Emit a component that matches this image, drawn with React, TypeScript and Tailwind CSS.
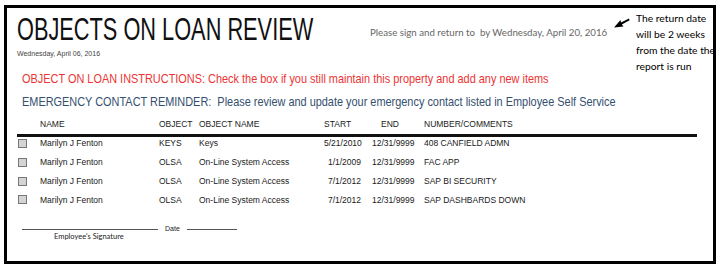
const rows = [
  { name: "Marilyn J Fenton", obj: "KEYS", objName: "Keys", start: "5/21/2010", end: "12/31/9999", comments: "408 CANFIELD ADMN" },
  { name: "Marilyn J Fenton", obj: "OLSA", objName: "On-Line System Access", start: "1/1/2009", end: "12/31/9999", comments: "FAC APP" },
  { name: "Marilyn J Fenton", obj: "OLSA", objName: "On-Line System Access", start: "7/1/2012", end: "12/31/9999", comments: "SAP BI SECURITY" },
  { name: "Marilyn J Fenton", obj: "OLSA", objName: "On-Line System Access", start: "7/1/2012", end: "12/31/9999", comments: "SAP DASHBARDS DOWN" },
];

const arial = "font-['Liberation_Sans',Arial,sans-serif]";
const calibri = "font-['Lato',sans-serif]";

export default function App() {
  return (
    <div className={`w-[720px] h-[268px] bg-white relative ${arial}`}>
      <div className="absolute left-[4px] top-[5px] w-[712px] h-[259px] border-[3px] border-black" />

      {/* arrow pointing at the return date */}
      <div className="absolute left-[613px] top-[17px]">
        <svg width="17" height="12" viewBox="0 0 17 12">
          <path d="M16 1.5 L8 5.5 L7.5 3 L1 10.5 L10.5 9.5 L8.8 7.6 L16.6 3.2 Z" fill="#000" />
        </svg>
      </div>
      <div className={`absolute left-[636px] top-[10px] text-[10.3px] leading-[16px] text-black whitespace-nowrap ${calibri}`}>
        The return date<br />will be 2 weeks<br />from the date the<br />report is run
      </div>

      <div className="relative pl-[17px] pt-[12px]">
        <div className="flex items-end">
          <div className="w-[353px] h-[34px] whitespace-nowrap">
            <span className="inline-block origin-left scale-x-[0.68] text-[32px] leading-[34px] text-[#111]">OBJECTS ON LOAN REVIEW</span>
          </div>
          <div className={`text-[9.7px] text-[#666] mb-[6px] whitespace-nowrap ${calibri}`}>
            Please sign and return to&nbsp; by Wednesday, April 20, 2016
          </div>
        </div>
        <div className="text-[7px] text-[#444] mt-[3px]">Wednesday, April 06, 2016</div>

        <div className="pl-[5px] mt-[8px] whitespace-nowrap text-[13px] leading-[22px]">
          <div className="text-[#ec3434] origin-left scale-x-[0.84]">
            OBJECT ON LOAN INSTRUCTIONS: Check the box if you still maintain this property and add any new items
          </div>
          <div className="text-[#34506f] mt-[1px] origin-left scale-x-[0.84]">
            EMERGENCY CONTACT REMINDER:&nbsp; Please review and update your emergency contact listed in Employee Self Service
          </div>
        </div>

        <div className="mt-[4px] w-[680px] text-[8.5px] text-[#1a1a1a]">
          <div className="flex h-[16px] items-center border-b-[3px] border-[#111] box-content pb-[1px]">
            <div className="w-[23px]" />
            <div className="w-[119px]">NAME</div>
            <div className="w-[40px]">OBJECT</div>
            <div className="w-[125px]">OBJECT NAME</div>
            <div className="w-[40px]">START</div>
            <div className="w-[17px]" />
            <div className="w-[43px]">END</div>
            <div>NUMBER/COMMENTS</div>
          </div>
          <div className="-mt-[2px]">
            {rows.map((r, i) => (
              <div key={i} className="flex items-center h-[18.7px]">
                <div className="w-[23px] flex">
                  <div className="w-[9px] h-[9px] ml-[1px] border border-[#777] bg-[#d4d4d4]" />
                </div>
                <div className="w-[119px]">{r.name}</div>
                <div className="w-[40px]">{r.obj}</div>
                <div className="w-[125px]">{r.objName}</div>
                <div className="w-[37px] text-right">{r.start}</div>
                <div className="w-[11px]" />
                <div className="w-[52px]">{r.end}</div>
                <div>{r.comments}</div>
              </div>
            ))}
          </div>
        </div>

        <div className="mt-[16px] pl-[5px] flex items-end text-[7px] text-[#222]">
          <div className="w-[136px] border-b border-[#555]" />
          <div className="px-[7px] leading-[8px] -mb-[3px]">Date</div>
          <div className="w-[50px] border-b border-[#555]" />
        </div>
        <div className={`pl-[37px] text-[7.5px] text-[#222] mt-[1px] ${calibri}`}>Employee's Signature</div>
      </div>
    </div>
  );
}
